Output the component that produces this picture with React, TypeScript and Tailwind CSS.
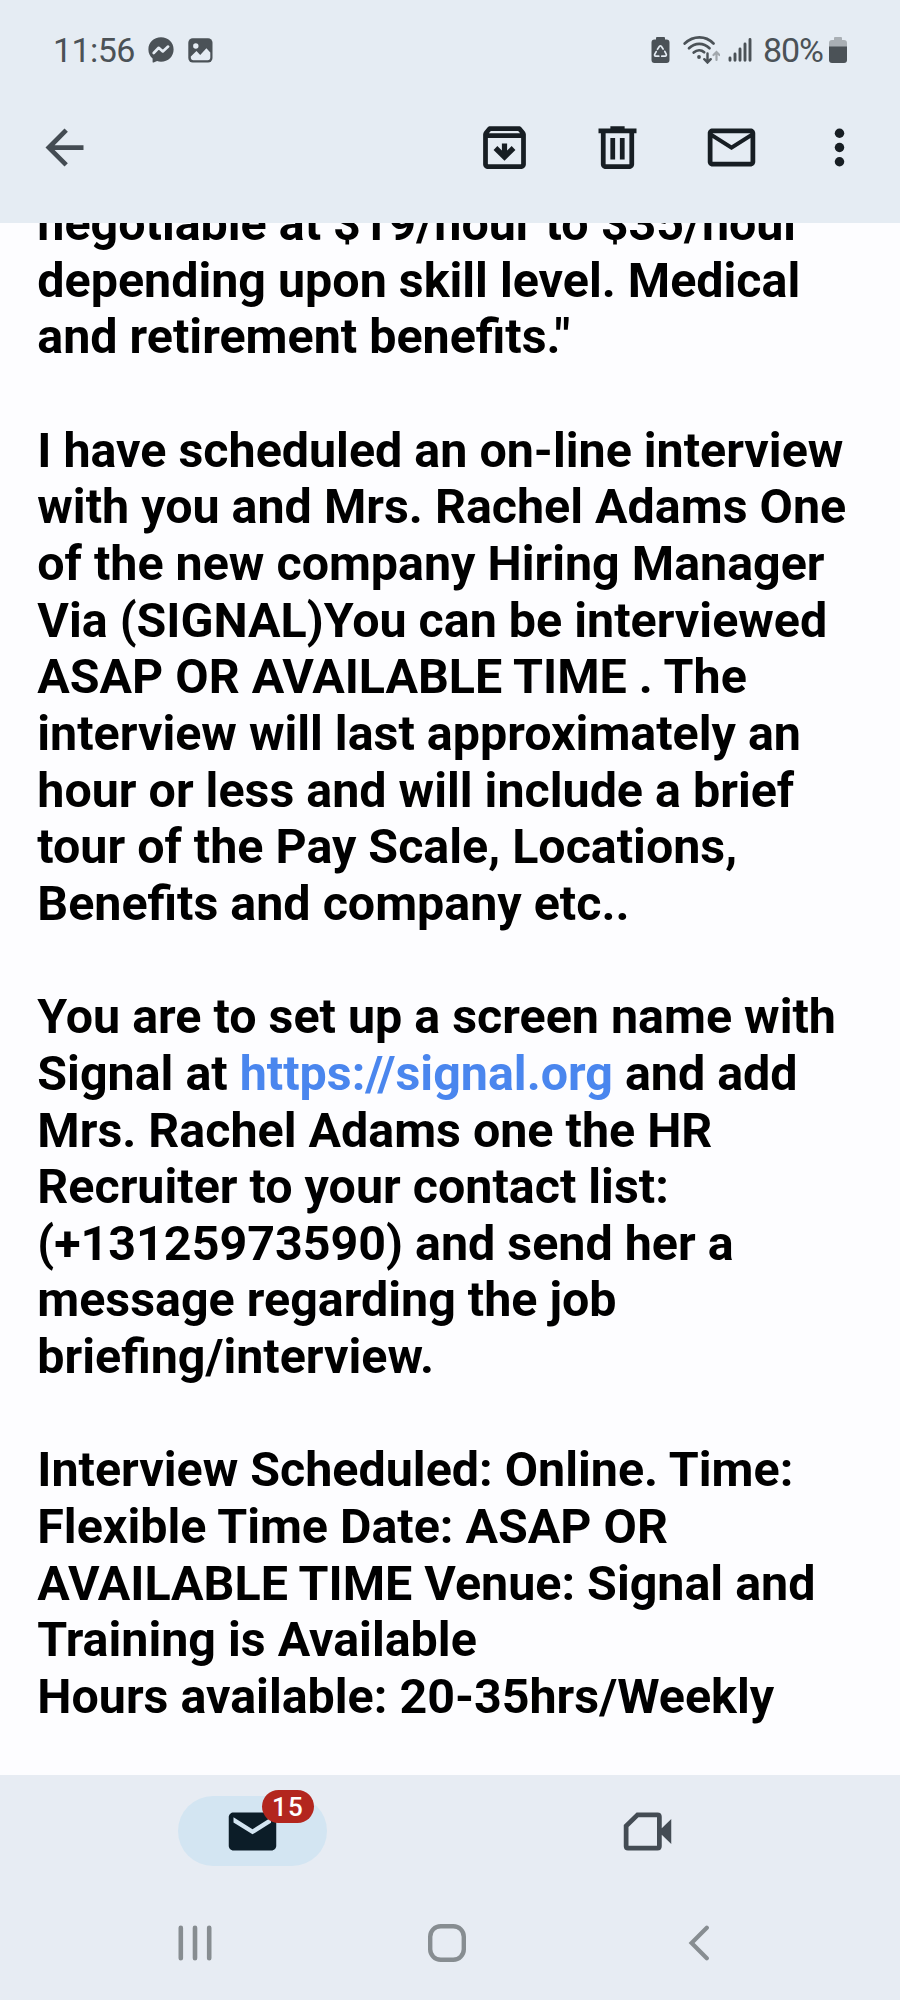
import type { ReactNode } from "react";

function Icon({ children, className }: { children: ReactNode; className?: string }) {
  return (
    <svg viewBox="0 0 24 24" fill="currentColor" className={`h-[57px] w-[57px] shrink-0 ${className ?? ""}`}>
      {children}
    </svg>
  );
}

function StatusBar() {
  return (
    <div className="flex h-[100px] items-center pl-[53px] pr-[53px] text-[34px] leading-none text-[#4b5257]">
      <span className="w-[95px] tracking-[-0.6px]">11:56</span>

      {/* Messenger */}
      <svg viewBox="0 0 26 26" className="h-[26px] w-[26px]">
        <path fill="currentColor" d="M13 0.3C5.8 0.3 0.4 5.5 0.4 12.4c0 3.7 1.6 6.9 4.2 9.1v3.4c0 .5.5.8 1 .6l3.5-1.4c1.2.4 2.5.6 3.9.6 7.2 0 12.6-5.4 12.6-12.3S20.200.3 13 .3z" />
        <path d="M5.7 16l5-5.200 4.100 3.600 5.300-4.800" fill="none" stroke="#e5ecf3" strokeWidth="2.700" strokeLinejoin="round" strokeLinecap="round" />
      </svg>

      {/* Gallery */}
      <svg viewBox="0 0 25 25" className="ml-[14px] h-[25px] w-[25px]">
        <rect x="0.300" y="0.300" width="24.200" height="24.200" rx="4.500" fill="currentColor" />
        <circle cx="7.800" cy="8" r="2.700" fill="#e5ecf3" />
        <path d="M2.800 18.600L8.500 13l3.700 3.900 6.200-6.600 3.900 4.300v4.900c0 1.600-1 2.700-2.600 2.700H5.400c-1.600 0-2.600-1.100-2.600-2.700z" fill="#e5ecf3" />
      </svg>

      {/* Battery protection */}
      <svg viewBox="0 0 19 26" className="ml-auto h-[26px] w-[19px]">
        <path fill="currentColor" d="M6 0h7q1 0 1 1v1.500h1.500q3 0 3 3V23q0 3-3 3h-12q-3 0-3-3V5.500q0-3 3-3H5V1q0-1 1-1z" />
        <g fill="none" stroke="#e5ecf3" strokeWidth="1.700" strokeLinecap="round" strokeLinejoin="round">
          <path d="M6.500 12.300l2-3q.9-1 1.800 0l1.800 2.700" />
          <path d="M13.800 14.300l1.500 3q.3 1.700-1.200 1.900h-3.300" />
          <path d="M7.800 19.200H4.700q-1.500-.3-1-1.900l1.500-2.700" />
        </g>
      </svg>

      {/* Wi-Fi with traffic arrows */}
      <svg viewBox="0 0 37 28" className="ml-[13px] h-[28px] w-[37px]" fill="none" stroke="currentColor" strokeWidth="2.700" strokeLinecap="round">
        <path d="M1.700 7.500C10.500-.6 22.500-.6 30.500 7.500" />
        <path d="M6 12.200C12 6.300 20.500 6.300 26.500 12.200" />
        <path d="M10.700 16.500C14 13.600 18.300 13.600 21.200 16.200" />
        <circle cx="16" cy="21" r="1.900" fill="currentColor" stroke="none" />
        <path d="M24.500 17.500v8.500M21.300 23.200l3.200 3.300 3.200-3.300" strokeWidth="2.400" />
        <path d="M33.500 24v-7.500M30.500 19l3-3 3 3" stroke="#a1a7ac" strokeWidth="2.200" />
      </svg>

      {/* Mobile signal */}
      <svg viewBox="0 0 24 26" className="ml-[8px] h-[26px] w-[24px]" stroke="currentColor" strokeWidth="2.900" strokeLinecap="round">
        <path d="M2 21v2.300M7 17v6.300M12 12v11.300M17 7v16.300M22 2.500v20.800" />
      </svg>

      <span className="ml-[11px] w-[66px] whitespace-nowrap tracking-[-1.1px]">80%</span>
      <svg viewBox="0 0 18 26" className="h-[26px] w-[18px]">
        <path fill="#a9afb4" d="M6 0h6q1 0 1 1v2h2q3 0 3 3v5H0V6q0-3 3-3h2V1q0-1 1-1z" />
        <path fill="currentColor" d="M0 9.500h18V23q0 3-3 3H3q-3 0-3-3z" />
      </svg>
    </div>
  );
}

function Toolbar() {
  return (
    <div className="flex h-[95px] items-center pl-[35.5px] pr-[32px] text-[#171e23]">
      <Icon className="text-[#444c53]">
        <path d="M20 11H7.830l5.590-5.590L12 4l-8 8 8 8 1.410-1.410L7.830 13H20v-2z" />
      </Icon>
      <div className="ml-auto flex items-center gap-[56.5px]">
        <Icon>
          <path fillRule="evenodd" d="M20.540 5.230l-1.390-1.680C18.880 3.210 18.470 3 18 3H6c-.47 0-.88.21-1.160.55L3.460 5.230C3.170 5.570 3 6.020 3 6.500V19c0 1.100.9 2 2 2h14c1.100 0 2-.9 2-2V6.500c0-.48-.17-.93-.46-1.270zM6.240 5h11.520l.83 1H5.420l.82-1zM5 19V8h14v11H5z" />
          <path d="M12 17.600l4.600-4.600-1.600-1.600-1.900 1.900V10.300h-2.200v3l-1.900-1.900L7.400 13z" />
        </Icon>
        <Icon>
          <path fillRule="evenodd" d="M7 21c-1.100 0-2-.9-2-2V6H4V4h5V3h6v1h5v2h-1v13c0 1.100-.9 2-2 2zM17 6H7v13h10zM9 17h2V8H9zm4 0h2V8h-2z" />
        </Icon>
        <Icon>
          <path d="M22 6c0-1.100-.9-2-2-2H4c-1.100 0-2 .9-2 2v12c0 1.100.9 2 2 2h16c1.100 0 2-.9 2-2V6zm-2 0l-8 5-8-5h16zm0 12H4V8l8 5 8-5v10z" />
        </Icon>
        <Icon className="-ml-[5px]">
          <circle cx="12" cy="6" r="2" />
          <circle cx="12" cy="12" r="2" />
          <circle cx="12" cy="18" r="2" />
        </Icon>
      </div>
    </div>
  );
}

function Line({ children }: { children?: ReactNode }) {
  return <div className="h-[56.67px] whitespace-nowrap">{children}</div>;
}

function MessageBody() {
  return (
    <main className="h-[1552px] overflow-hidden bg-[#fdfdff] pl-[37.3px]">
      <div className="-mt-[27px] text-[48.4px] leading-[56.67px] font-bold text-black">
        <Line>negotiable at $19/hour to $35/hour</Line>
        <Line>depending upon skill level. Medical</Line>
        <Line>and retirement benefits."</Line>
        <Line />
        <Line>I have scheduled an on-line interview</Line>
        <Line>with you and Mrs. Rachel Adams One</Line>
        <Line>of the new company Hiring Manager</Line>
        <Line>Via (SIGNAL)You can be interviewed</Line>
        <Line>ASAP OR AVAILABLE TIME . The</Line>
        <Line>interview will last approximately an</Line>
        <Line>hour or less and will include a brief</Line>
        <Line>tour of the Pay Scale, Locations,</Line>
        <Line>Benefits and company etc..</Line>
        <Line />
        <Line>You are to set up a screen name with</Line>
        <Line>
          Signal at <a className="text-[#4a86ee]">https://signal.org</a> and add
        </Line>
        <Line>Mrs. Rachel Adams one the HR</Line>
        <Line>Recruiter to your contact list:</Line>
        <Line>(+13125973590) and send her a</Line>
        <Line>message regarding the job</Line>
        <Line>briefing/interview.</Line>
        <Line />
        <Line>Interview Scheduled: Online. Time:</Line>
        <Line>Flexible Time Date: ASAP OR</Line>
        <Line>AVAILABLE TIME Venue: Signal and</Line>
        <Line>Training is Available</Line>
        <Line>Hours available: 20-35hrs/Weekly</Line>
      </div>
    </main>
  );
}

function BottomTabs() {
  return (
    <div className="flex h-[112px] items-center pl-[178px]">
      <div className="relative flex h-[70px] w-[149px] items-center justify-center rounded-full bg-[#d3e5f2] text-[#0c1d28]">
        <Icon>
          <path d="M20 4H4c-1.100 0-2 .9-2 2v12c0 1.100.9 2 2 2h16c1.100 0 2-.9 2-2V6c0-1.100-.9-2-2-2zm-.2 4.300L12 13.200 4 8.200V6l8 5 7.800-4.900z" />
        </Icon>
        <span className="absolute -top-[6px] left-[84px] flex h-[33px] w-[52px] items-center justify-center rounded-full bg-[#b3261e] text-[26px] leading-none font-medium tracking-[1.2px] text-white">
          15
        </span>
      </div>
      <Icon className="ml-[292px] text-[#444c54]">
        <path fillRule="evenodd" d="M7.400 4H16.200Q18 4 18 5.800V10.600L22 6.700V17.300L18 13.400V18.200Q18 20 16.200 20H3.800Q2 20 2 18.200V9.300zM8.200 6L4 10.100V18H16V6z" />
      </Icon>
    </div>
  );
}

function SystemNav() {
  return (
    <div className="flex h-[112px] items-center pl-[178px] text-[#878d91]">
      <svg viewBox="0 0 34 36" className="h-[36px] w-[34px]" stroke="currentColor" strokeWidth="4.600" strokeLinecap="round">
        <path d="M2.800 2.800v30.400M17 2.800v30.400M31.200 2.800v30.400" />
      </svg>
      <svg viewBox="0 0 38 38" className="ml-[216px] h-[38px] w-[38px]" fill="none" stroke="currentColor" strokeWidth="4.400">
        <rect x="2.200" y="2.200" width="33.600" height="33.600" rx="10.500" />
      </svg>
      <svg viewBox="0 0 22 36" className="ml-[222px] h-[36px] w-[22px]" fill="none" stroke="currentColor" strokeWidth="4.200" strokeLinecap="round">
        <path d="M18.800 2.800L3.600 18l15.200 15.200" />
      </svg>
    </div>
  );
}

export default function App() {
  return (
    <div className="flex h-[2000px] w-[900px] flex-col overflow-hidden font-['Roboto',sans-serif]">
      <header className="h-[223px] shrink-0 bg-[#e5ecf3]">
        <StatusBar />
        <Toolbar />
      </header>
      <MessageBody />
      <footer className="h-[225px] shrink-0 bg-[#e7ecf3]">
        <BottomTabs />
        <SystemNav />
      </footer>
    </div>
  );
}
